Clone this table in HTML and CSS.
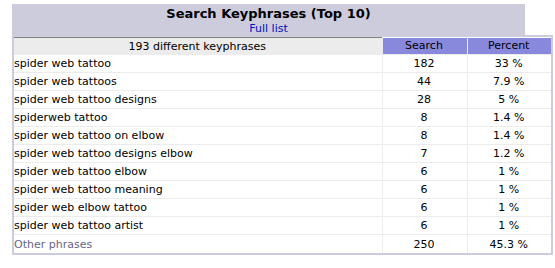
FILE: index.html
```html
<!DOCTYPE html>
<html>
<head>
<meta charset="utf-8">
<link rel="stylesheet" href="styles.css">
</head>
<body>
<div class="wrap">
  <div class="top">
    <div class="title">
      <div class="title-text">Search Keyphrases (Top 10)</div>
      <a class="full" href="#">Full list</a>
    </div>
    <div class="blank"></div>
  </div>
  <div class="box">
    <table class="data">
      <colgroup><col class="c1"><col class="c2"><col class="c3"></colgroup>
      <tr class="head">
        <th class="h1">193 different keyphrases</th>
        <th class="hb">Search</th>
        <th class="hb">Percent</th>
      </tr>
      <tr><td class="kw">spider web tattoo</td><td>182</td><td>33 %</td></tr>
      <tr><td class="kw">spider web tattoos</td><td>44</td><td>7.9 %</td></tr>
      <tr><td class="kw">spider web tattoo designs</td><td>28</td><td>5 %</td></tr>
      <tr><td class="kw">spiderweb tattoo</td><td>8</td><td>1.4 %</td></tr>
      <tr><td class="kw">spider web tattoo on elbow</td><td>8</td><td>1.4 %</td></tr>
      <tr><td class="kw">spider web tattoo designs elbow</td><td>7</td><td>1.2 %</td></tr>
      <tr><td class="kw">spider web tattoo elbow</td><td>6</td><td>1 %</td></tr>
      <tr><td class="kw">spider web tattoo meaning</td><td>6</td><td>1 %</td></tr>
      <tr><td class="kw">spider web elbow tattoo</td><td>6</td><td>1 %</td></tr>
      <tr><td class="kw">spider web tattoo artist</td><td>6</td><td>1 %</td></tr>
      <tr class="last"><td class="kw other">Other phrases</td><td>250</td><td>45.3 %</td></tr>
    </table>
  </div>
</div>
</body>
</html>
```

FILE: styles.css
```css
html, body { margin: 0; padding: 0; background: #ffffff; }
body { font-family: "DejaVu Sans", Verdana, sans-serif; font-size: 11px; color: #000; }
.wrap { margin: 4px 0 0 12px; width: 541px; }
.top { display: flex; }
.title {
  width: 513px; height: 31px; background: #ccccdd;
  display: flex; flex-direction: column; align-items: center;
  padding-top: 2px; box-sizing: border-box;
}
.title-text { font-size: 13px; font-weight: bold; line-height: 16px; }
.full { color: #0011bb; text-decoration: none; font-size: 11px; line-height: 13px; }
.blank { flex: 1; background: #ffffff; }
.box { background: #ccccdd; padding: 2px 2px 2px 2px; }
.data { width: 537px; border-collapse: collapse; table-layout: fixed; background: #ffffff; }
.c1 { width: 368px; }
.c2 { width: 85px; }
.c3 { width: 84px; }
th, td {
  font-size: 11px; font-weight: normal; text-align: center; padding: 0 2px 0 1px;
  height: 17px; border-right: 1px solid #ececec; border-bottom: 1px solid #ececec;
  white-space: nowrap; overflow: hidden;
}
th:last-child, td:last-child { border-right: none; }
.head th { height: 16px; border-bottom: 1px solid #ececec; }
.h1 { background: #ececec; border-top: 1px solid #808080; }
.hb { background: #8888dd; border-right: 1px solid #ececec; }
td.kw { text-align: left; padding-left: 0; }
.other { color: #666688; }
.last td { border-bottom: none; height: 18px; }
```
